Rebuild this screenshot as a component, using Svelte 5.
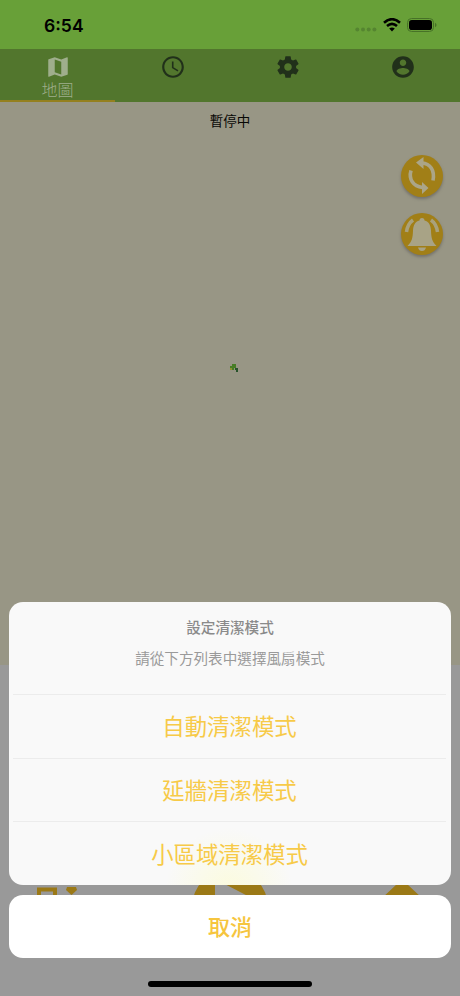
<script lang="ts">
  let activeTab = "map";
  let mode = "";
  const tabs = [
    { id: "map", label: "地圖" },
    { id: "schedule", label: "" },
    { id: "settings", label: "" },
    { id: "account", label: "" },
  ];
  const modes = ["自動清潔模式", "延牆清潔模式", "小區域清潔模式"];
  const icons: { [key: string]: string } = {
    map: "M20.5 3l-.16.03L15 5.1 9 3 3.36 4.9c-.21.07-.36.25-.36.48V20.5c0 .28.22.5.5.5l.16-.03L9 18.9l6 2.1 5.64-1.9c.21-.07.36-.25.36-.48V3.5c0-.28-.22-.5-.5-.5zM15 19l-6-2.11V5l6 2.11V19z",
    schedule:
      "M11.99 2C6.47 2 2 6.48 2 12s4.47 10 9.99 10C17.52 22 22 17.52 22 12S17.52 2 11.99 2zM12 20c-4.42 0-8-3.58-8-8s3.58-8 8-8 8 3.58 8 8-3.58 8-8 8zm.5-13H11v6l5.25 3.15.75-1.23-4.5-2.67z",
    settings:
      "M19.43 12.98c.04-.32.07-.64.07-.98s-.03-.66-.07-.98l2.11-1.65c.19-.15.24-.42.12-.64l-2-3.46c-.12-.22-.39-.3-.61-.22l-2.49 1c-.52-.4-1.08-.73-1.69-.98l-.38-2.65C14.46 2.18 14.25 2 14 2h-4c-.25 0-.46.18-.49.42l-.38 2.65c-.61.25-1.17.59-1.69.98l-2.49-1c-.23-.09-.49 0-.61.22l-2 3.46c-.13.22-.07.49.12.64l2.11 1.65c-.04.32-.07.65-.07.98s.03.66.07.98l-2.11 1.65c-.19.15-.24.42-.12.64l2 3.46c.12.22.39.3.61.22l2.49-1c.52.4 1.08.73 1.69.98l.38 2.65c.03.24.24.42.49.42h4c.25 0 .46-.18.49-.42l.38-2.65c.61-.25 1.17-.59 1.69-.98l2.49 1c.23.09.49 0 .61-.22l2-3.46c.12-.22.07-.49-.12-.64l-2.11-1.65zM12 15.5c-1.93 0-3.5-1.57-3.5-3.5s1.57-3.5 3.5-3.5 3.5 1.57 3.5 3.5-1.57 3.5-3.5 3.5z",
    account:
      "M12 2C6.48 2 2 6.48 2 12s4.48 10 10 10 10-4.48 10-10S17.52 2 12 2zm0 3c1.66 0 3 1.34 3 3s-1.34 3-3 3-3-1.34-3-3 1.34-3 3-3zm0 14.2c-2.5 0-4.71-1.28-6-3.22.03-1.99 4-3.08 6-3.08 1.99 0 5.97 1.09 6 3.08-1.29 1.94-3.5 3.22-6 3.22z",
  };
</script>

<main>
  <header>
    <span class="time">6:54</span>
    <div class="status">
      <svg class="dots" width="22" height="5" viewBox="0 0 22 5">
        <circle cx="2.3" cy="2.5" r="2" />
        <circle cx="8" cy="2.5" r="2" />
        <circle cx="13.7" cy="2.5" r="2" />
        <circle cx="19.4" cy="2.5" r="2" />
      </svg>
      <svg width="18" height="14" viewBox="0 0 18 14">
        <path d="M1 4.7Q9-2.3 17 4.7M4 8Q9 3.7 14 8" fill="none" stroke="#000" stroke-width="2.6" />
        <path d="M6.2 10.6Q9 8.3 11.8 10.6L9 13.5z" />
      </svg>
      <svg width="30" height="14" viewBox="0 0 30 14">
        <rect x=".5" y=".5" width="26" height="13" rx="4" fill="none" stroke="#477227" />
        <rect x="2" y="2" width="23" height="10" rx="2.8" />
        <path d="M28 4.8q1.6.7 1.6 2.2T28 9.2z" fill="#477227" />
      </svg>
    </div>
  </header>

  <nav>
    {#each tabs as tab}
      <button class="tab" class:active={activeTab === tab.id} on:click={() => (activeTab = tab.id)}>
        <svg width="26" height="26" viewBox="0 0 24 24"><path d={icons[tab.id]} /></svg>
        {#if tab.label}<span>{tab.label}</span>{/if}
      </button>
    {/each}
  </nav>

  <section class="map">
    <p>暫停中</p>
    <div class="tools">
      <button class="round">
        <svg width="42" height="42" viewBox="0 0 42 42">
          <path d="M21 8C29 8.5 34 15 32 25.500M21.500 32.500C12 31.500 7.500 24 10 15.500" fill="none" stroke="#aba588" stroke-width="3.6" />
          <path d="M15 7.500L22.500 2V14zM27.500 33L21 27V39z" fill="#aba588" />
        </svg>
      </button>
      <button class="round">
        <svg width="42" height="42" viewBox="0 0 42 42">
          <path d="M5.500 19Q6.500 11 12 7M36.500 19Q35.500 11 30 7" fill="none" stroke="#a9a17c" stroke-width="3.5" />
          <path d="M21 5c-1.700 0-2.500 1.100-2.500 2.400C14 8.500 12.300 12.500 12 17.500 11.700 25 11 28.500 6.500 33h29c-4.500-4.500-5.200-8-5.500-15.500C29.700 12.500 28 8.500 23.500 7.400 23.500 6.100 22.700 5 21 5zM17 34.500h8q-1 3.500-4 3.500t-4-3.500z" fill="#a8a386" />
        </svg>
      </button>
    </div>
    <svg class="trace" width="14" height="12" viewBox="0 0 14 12">
      <path d="M2 4h2V2h4v4H6v2H3V6H2z" fill="#477d24" />
      <path d="M2 6h2v2H2z" fill="#8f9133" />
      <path d="M7 6h3v4H8V8H7z" fill="#28532b" />
    </svg>
  </section>

  <section class="controls">
    <svg width="44" height="48" viewBox="0 0 44 48" fill="none">
      <path d="M4 46V20.500h16V46" stroke="#9b7916" stroke-width="4" />
      <path d="M32 18h9l1 3-5.500 5-5.500-5z" fill="#9b7916" />
    </svg>
    <svg width="76" height="76" viewBox="0 0 76 76">
      <path fill-rule="evenodd" d="M38 0a38 38 0 1 1 0 76a38 38 0 1 1 0-76zM23 10v56l50-30z" fill="#9b7916" />
    </svg>
    <svg width="44" height="48" viewBox="0 0 44 48">
      <path d="M22 13q3 0 5 2l16 15h-6v16H7V30H1l16-15q2-2 5-2z" fill="#9b7916" />
    </svg>
  </section>

  <div class="overlay">
    <div class="sheet">
      <div class="title">
        <h1>設定清潔模式</h1>
        <p>請從下方列表中選擇風扇模式</p>
      </div>
      {#each modes as item}
        <button class="option" on:click={() => (mode = item)}>{item}</button>
      {/each}
    </div>
    <button class="cancel">取消</button>
    <div class="home"></div>
  </div>
</main>

<style>
  main {
    position: relative;
    display: flex;
    flex-direction: column;
    height: 996px;
    overflow: hidden;
    background: #999;
    font-family: "Noto Sans CJK TC", sans-serif;
  }
  button {
    border: 0;
    padding: 0;
    margin: 0;
    background: none;
    font-family: inherit;
    cursor: pointer;
  }
  h1,
  p {
    margin: 0;
  }
  svg {
    display: block;
  }
  header {
    display: flex;
    justify-content: space-between;
    box-sizing: border-box;
    height: 49px;
    padding: 0 23px 0 44px;
    background: #68a038;
  }
  .time {
    padding-top: 15px;
    font: 600 17.6px/22px Inter, sans-serif;
  }
  .status {
    display: flex;
    align-items: flex-start;
    gap: 6px;
    padding-top: 18px;
  }
  .dots {
    margin-top: 9px;
    fill: #558530;
  }
  nav {
    display: grid;
    grid-template-columns: repeat(4, 1fr);
    height: 53px;
    background: #52762d;
  }
  .tab {
    display: flex;
    flex-direction: column;
    align-items: center;
    box-sizing: border-box;
    padding-top: 5px;
    border-bottom: 2px solid transparent;
    font-size: 16px;
    line-height: 20px;
    color: #9fae8c;
    fill: #21301a;
  }
  .tab.active {
    border-color: #94801f;
    fill: #9fae8c;
  }
  .tab span {
    margin-top: -1px;
    font-weight: 300;
  }
  .map {
    position: relative;
    height: 563px;
    background: #989685;
  }
  .map p {
    padding-top: 8px;
    font-size: 13.5px;
    line-height: 20px;
    text-align: center;
    color: #080805;
  }
  .tools {
    display: flex;
    flex-direction: column;
    align-items: flex-end;
    gap: 16px;
    padding: 25px 17px 0 0;
  }
  .round {
    width: 42px;
    height: 42px;
    border-radius: 50%;
    background: #a17f17;
    box-shadow: 0 2px 3px #74726a;
  }
  .trace {
    position: absolute;
    top: 260px;
    left: 228px;
  }
  .controls {
    display: flex;
    justify-content: space-between;
    padding: 204px 36px 0 35px;
  }
  .overlay {
    position: absolute;
    inset: 0;
    display: flex;
    flex-direction: column;
    justify-content: flex-end;
    padding: 0 9px 9px;
  }
  .sheet {
    box-sizing: border-box;
    height: 283px;
    border-radius: 14px;
    background: radial-gradient(circle at 220px 290px, #fbfbdd 0, #f9f9f9 64px);
  }
  .title {
    height: 92px;
    text-align: center;
  }
  .title h1 {
    padding-top: 14px;
    font-size: 14.6px;
    line-height: 22px;
    font-weight: 500;
    color: #8a8a8a;
  }
  .title p {
    padding-top: 9px;
    font-size: 14.6px;
    line-height: 22px;
    color: #9a9a9a;
  }
  .option {
    display: block;
    width: calc(100% - 9px);
    height: 63.7px;
    margin-left: 4px;
    padding-bottom: 2px;
    border-top: 1px solid #ececec;
    font-size: 22.4px;
    font-weight: 400;
    color: #f7ca48;
  }
  .cancel {
    height: 63px;
    margin-top: 10px;
    padding-bottom: 4px;
    border-radius: 14px;
    background: #fff;
    font-size: 22px;
    font-weight: 500;
    color: #f6c53e;
  }
  .home {
    align-self: center;
    width: 164px;
    height: 6px;
    margin-top: 23px;
    border-radius: 3px;
    background: #000;
  }
</style>
